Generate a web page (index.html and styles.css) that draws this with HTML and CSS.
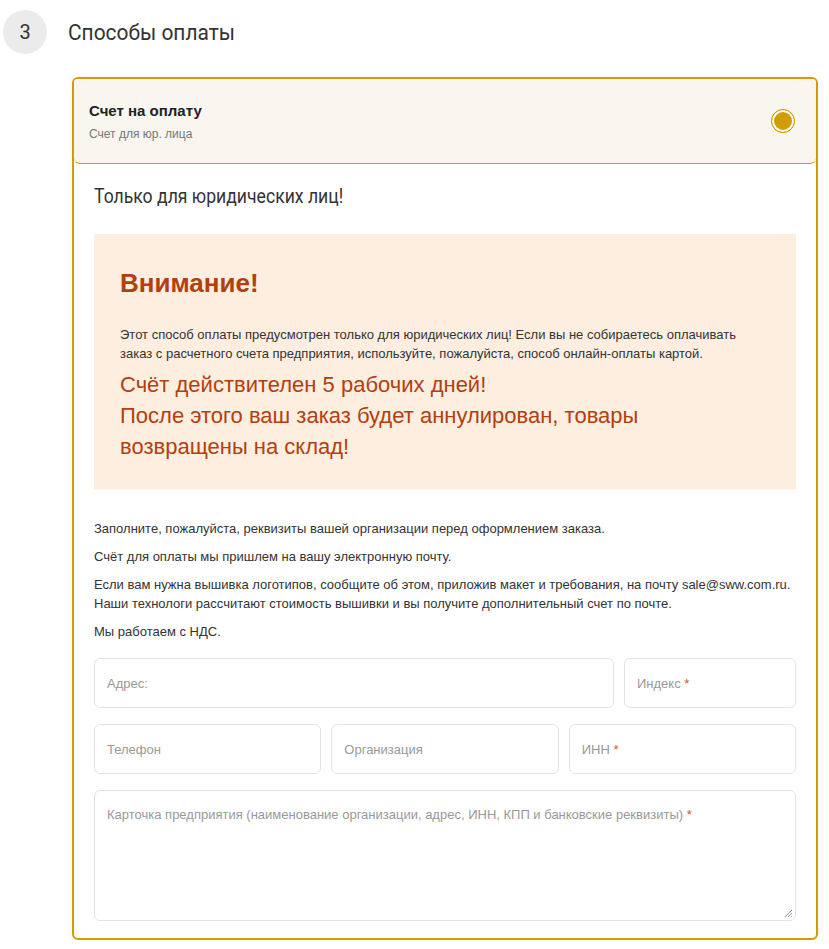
FILE: index.html
```html
<!DOCTYPE html>
<html lang="ru">

<head>
    <meta charset="UTF-8">
    <meta name="viewport" content="width=device-width, initial-scale=1.0">
    <title>Способы оплаты</title>
    <link rel="stylesheet" href="styles.css">
</head>

<body>
    <div class="step">
        <span class="step-num">3</span>
        <h2 class="step-title"><span>Способы оплаты</span></h2>
    </div>

    <div class="pay-card">
        <div class="pay-head">
            <div class="pay-name">
                <div class="pay-title">Счет на оплату</div>
                <div class="pay-sub">Счет для юр. лица</div>
            </div>
            <span class="pay-radio"></span>
        </div>

        <div class="pay-body">
            <h3 class="pay-only"><span>Только для юридических лиц!</span></h3>

            <div class="alert">
                <div class="alert-title">Внимание!</div>
                <p class="alert-text">Этот способ оплаты предусмотрен только для юридических лиц! Если вы не собираетесь оплачивать<br>заказ с расчетного счета предприятия, используйте, пожалуйста, способ онлайн-оплаты картой.</p>
                <p class="alert-big">Счёт действителен 5 рабочих дней!<br>После этого ваш заказ будет аннулирован, товары<br>возвращены на склад!</p>
            </div>

            <div class="info">
                <p>Заполните, пожалуйста, реквизиты вашей организации перед оформлением заказа.</p>
                <p>Счёт для оплаты мы пришлем на вашу электронную почту.</p>
                <p>Если вам нужна вышивка логотипов, сообщите об этом, приложив макет и требования, на почту sale@sww.com.ru.<br>Наши технологи рассчитают стоимость вышивки и вы получите дополнительный счет по почте.</p>
                <p>Мы работаем с НДС.</p>
            </div>

            <div class="form">
                <div class="row row-addr">
                    <label class="field"><span>Адрес:</span></label>
                    <label class="field"><span>Индекс <i>*</i></span></label>
                </div>
                <div class="row row-three">
                    <label class="field"><span>Телефон</span></label>
                    <label class="field"><span>Организация</span></label>
                    <label class="field"><span>ИНН <i>*</i></span></label>
                </div>
                <label class="field field-area"><span>Карточка предприятия (наименование организации, адрес, ИНН, КПП и банковские реквизиты) <i>*</i></span>
                    <svg class="grip" width="9" height="9" viewBox="0 0 9 9"><path d="M8 1L1 8M8 4L4 8M8 7L7 8" stroke="#999" stroke-width="1"/></svg>
                </label>
            </div>
        </div>
    </div>
</body>

</html>
```

FILE: styles.css
```css
* {
    padding: 0;
    margin: 0;
    box-sizing: border-box;
}

body {
    font-family: "Liberation Sans", Arial, sans-serif;
    color: #333;
    background: #fff;
    padding: 10px 11px 0 3px;
}

.step {
    display: flex;
    align-items: center;
    height: 44px;
}

.step-num {
    width: 44px;
    height: 44px;
    border-radius: 50%;
    background-color: #ebebeb;
    font-family: Roboto, sans-serif;
    font-size: 20px;
    line-height: 44px;
    text-align: center;
    color: #333;
}

.step-title {
    margin-left: 21px;
    font-family: Roboto, sans-serif;
    font-weight: 400;
    font-size: 22px;
    color: #333;
}

/* заголовки узким начертанием */
.step-title span,
.pay-only span {
    display: inline-block;
    transform-origin: left center;
}

.step-title span {
    transform: scaleX(.95);
}

.pay-only span {
    transform: scaleX(.88);
}

.pay-card {
    margin: 23px 0 0 69px;
    border: 2px solid #d29d00;
    border-radius: 6px;
    box-shadow: 0 0 6px rgba(0, 0, 0, .06);
    padding-bottom: 17px;
}

.pay-head {
    display: flex;
    align-items: center;
    justify-content: space-between;
    height: 85px;
    padding: 0 21px 0 15px;
    background-color: #f9f6ef;
    border-bottom: 1px solid #d29d00;
    border-radius: 4px 4px 6px 6px;
}

.pay-title {
    font-size: 15px;
    font-weight: bold;
    color: #222;
}

.pay-sub {
    margin-top: 8px;
    font-size: 12px;
    color: #777;
}

.pay-radio {
    width: 24px;
    height: 24px;
    border-radius: 50%;
    border: 1px solid #d29d00;
    background: #d29d00;
    box-shadow: inset 0 0 0 2px #fff;
}

.pay-body {
    padding: 0 20px 0 20px;
}

.pay-only {
    margin: 20px 0 26px;
    font-family: Roboto, sans-serif;
    font-weight: 400;
    font-size: 20px;
    color: #333;
}

.alert {
    background-color: #fdeee0;
    padding: 34px 26px 26px;
    height: 255px;
}

.alert-title {
    font-size: 26px;
    font-weight: bold;
    color: #b2400e;
}

.alert-text {
    margin-top: 26px;
    font-size: 13px;
    line-height: 19px;
    color: #333;
}

.alert-big {
    margin-top: 6px;
    font-size: 22px;
    line-height: 31px;
    color: #b2400e;
}

.info {
    margin-top: 30px;
    font-size: 13px;
    line-height: 19px;
}

.info p {
    margin-bottom: 9px;
}

.form {
    margin-top: 17px;
    display: flex;
    flex-direction: column;
    gap: 16px;
}

.row {
    display: grid;
    gap: 10px;
}

.row-addr {
    grid-template-columns: 1fr 172px;
}

.row-three {
    grid-template-columns: 1fr 1fr 1fr;
}

.field {
    position: relative;
    display: flex;
    align-items: center;
    height: 50px;
    padding: 0 12px;
    border: 1px solid #e3e3e3;
    border-radius: 6px;
    font-size: 13px;
    color: #999;
}

.field i {
    font-style: normal;
    color: #d9541e;
}

.field-area {
    height: 131px;
    align-items: flex-start;
    padding-top: 16px;
}

.grip {
    position: absolute;
    right: 2px;
    bottom: 2px;
}
```
